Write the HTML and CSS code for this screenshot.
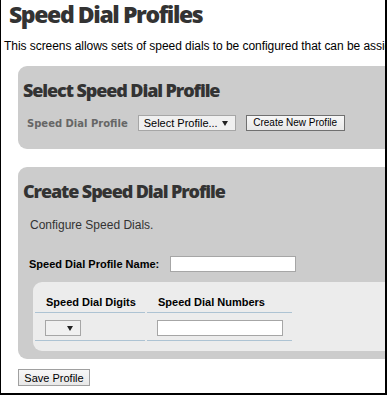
FILE: index.html
```html
<!DOCTYPE html>
<html lang="en">
<head>
    <meta charset="UTF-8">
    <title>Speed Dial Profiles</title>
    <link rel="stylesheet" href="styles.css">
</head>
<body>
    <div class="frame">
        <div class="page">
            <h1 class="title">Speed Dial Profiles</h1>
            <p class="intro">This screens allows sets of speed dials to be configured that can be assigned to users and devices.</p>

            <div class="panel panel-select">
                <h2 class="panel-title">Select Speed Dial Profile</h2>
                <div class="select-row">
                    <label class="field-label">Speed Dial Profile</label>
                    <select class="select select-profile">
                        <option>Select Profile...</option>
                    </select>
                    <button class="btn btn-create">Create New Profile</button>
                </div>
            </div>

            <div class="panel panel-create">
                <h2 class="panel-title">Create Speed Dial Profile</h2>
                <p class="hint">Configure Speed Dials.</p>
                <div class="name-row">
                    <label class="name-label">Speed Dial Profile Name:</label>
                    <input type="text" class="text-input">
                </div>
                <div class="inner">
                    <table class="dial-table">
                        <thead>
                            <tr>
                                <th class="col-digits">Speed Dial Digits</th>
                                <th class="col-numbers">Speed Dial Numbers</th>
                            </tr>
                        </thead>
                        <tbody>
                            <tr>
                                <td><select class="select select-digit"><option></option></select></td>
                                <td><input type="text" class="text-input"></td>
                            </tr>
                        </tbody>
                    </table>
                </div>
            </div>

            <button class="btn btn-save">Save Profile</button>
        </div>
    </div>
</body>
</html>
```

FILE: styles.css
```css
body {
    margin: 0;
    background: #fff;
    font-family: 'Liberation Sans', Arial, sans-serif;
}
.frame {
    width: 387px;
    height: 395px;
    box-sizing: border-box;
    border-left: 1px solid #000;
    border-right: 2px solid #000;
    border-bottom: 2px solid #000;
    overflow: hidden;
}
.page {
    width: 700px;
}
.title {
    margin: 0 0 0 8px;
    padding-top: 1px;
    font-family: 'Open Sans', sans-serif;
    font-size: 23px;
    font-weight: 800;
    line-height: 27px;
    letter-spacing: -1.4px;
    color: #333;
}
.intro {
    margin: 11px 0 0 3px;
    font-size: 12px;
    line-height: 14px;
    letter-spacing: -0.05px;
    color: #000;
    white-space: nowrap;
}
.panel {
    margin-left: 17px;
    background: #ccc;
    border-radius: 9px;
}
.panel-select {
    margin-top: 13px;
    padding: 13px 0 18px 5px;
}
.panel-create {
    margin-top: 18px;
    padding: 13px 0 8px 0;
}
.panel-title {
    margin: 0;
    font-family: 'Open Sans', sans-serif;
    font-size: 18px;
    font-weight: 800;
    line-height: 22px;
    letter-spacing: -1.1px;
    color: #333;
}
.panel-create .panel-title {
    padding-left: 5px;
}
.select-row {
    display: flex;
    align-items: center;
    gap: 10px;
    margin: 14px 0 0 4px;
    height: 16px;
}
.field-label {
    font-family: 'DejaVu Sans', Verdana, sans-serif;
    font-size: 10px;
    font-weight: 700;
    color: #666;
    white-space: nowrap;
}
.select {
    appearance: none;
    -webkit-appearance: none;
    margin: 0;
    box-sizing: border-box;
    height: 16px;
    border: 1px solid #a6a6a6;
    border-radius: 0;
    background: #f0f0f0 url("data:image/svg+xml,%3Csvg xmlns='http://www.w3.org/2000/svg' width='6' height='5'%3E%3Cpath d='M0 0h6L3 5z' fill='%23222'/%3E%3C/svg%3E") no-repeat right 7px center;
    font-family: 'Liberation Sans', Arial, sans-serif;
    font-size: 11px;
    color: #000;
    padding: 0 14px 0 5px;
}
.select-profile {
    width: 98px;
}
.select-digit {
    width: 36px;
    display: block;
}
.btn {
    box-sizing: border-box;
    margin: 0;
    height: 16px;
    padding: 0 7px;
    border: 1px solid #707070;
    border-radius: 0;
    background: linear-gradient(#f7f7f7, #e8e8e8);
    font-family: 'Liberation Sans', Arial, sans-serif;
    font-size: 11px;
    line-height: 14px;
    color: #000;
    white-space: nowrap;
}
.btn-create {
    width: 99px;
    padding: 0;
    font-size: 10px;
}
.hint {
    margin: 16px 0 0 12px;
    font-size: 12px;
    line-height: 14px;
    color: #333;
}
.name-row {
    display: flex;
    align-items: center;
    gap: 11px;
    margin: 24px 0 0 11px;
    height: 16px;
}
.name-label {
    font-size: 11px;
    font-weight: 700;
    color: #000;
    white-space: nowrap;
}
.text-input {
    box-sizing: border-box;
    width: 126px;
    height: 16px;
    margin: 0;
    padding: 0 3px;
    border: 1px solid #a6a6a6;
    background: #fff;
    display: block;
}
.inner {
    margin: 10px 0 0 15px;
    padding-bottom: 8px;
    background: #ececec;
    border-radius: 9px;
}
.dial-table {
    border-spacing: 2px;
    border-collapse: separate;
    table-layout: fixed;
    width: 261px;
}
.dial-table th {
    padding: 11px 0 3px 11px;
    text-align: left;
    font-size: 11px;
    font-weight: 700;
    line-height: 14px;
    color: #000;
    white-space: nowrap;
    border-bottom: 1px solid #adc3d3;
}
.dial-table td {
    padding: 5px 0 4px 10px;
    border-bottom: 1px solid #adc3d3;
}
.col-digits {
    width: 99px;
}
.col-numbers {
    width: 134px;
}
.btn-save {
    display: block;
    margin: 10px 0 0 17px;
    height: 17px;
    width: 72px;
    padding: 0;
    border-color: #a0a0a0;
}
```
